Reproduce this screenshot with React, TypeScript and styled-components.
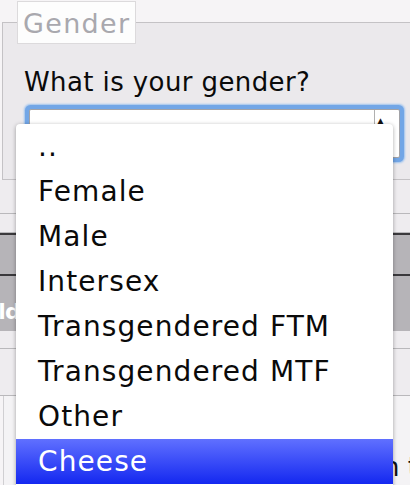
import React from "react";
import styled, { createGlobalStyle } from "styled-components";

const options = [
  "..",
  "Female",
  "Male",
  "Intersex",
  "Transgendered FTM",
  "Transgendered MTF",
  "Other",
  "Cheese",
];

const GlobalStyle = createGlobalStyle`
  html, body {
    margin: 0;
    padding: 0;
    width: 410px;
    height: 485px;
    overflow: hidden;
    background: #f6f4f6;
    font-family: "DejaVu Sans", Verdana, sans-serif;
  }
`;

const Page = styled.div`
  display: flex;
  flex-direction: column;
  width: 410px;
  height: 485px;
  overflow: hidden;

  & > * {
    flex-shrink: 0;
  }
`;

const Fieldset = styled.fieldset`
  margin: 1px 0 0 2px;
  padding: 0;
  width: 440px;
  height: 179px;
  box-sizing: border-box;
  background: #ebe9ec;
  border: 1px solid #c4c2c5;
  border-right: none;
`;

const Legend = styled.legend`
  margin-left: 14px;
  padding: 0 5px;
  height: 43px;
  box-sizing: border-box;
  line-height: 43px;
  background: #fdfdfd;
  border: 1px solid #dcdadc;
  color: #a9a8ae;
  font-size: 27px;
  letter-spacing: 1.3px;
`;

const Content = styled.div`
  display: flex;
  flex-direction: column;
  padding: 0 0 0 21px;
`;

const Label = styled.label`
  font-size: 26px;
  line-height: 32px;
  letter-spacing: 0.4px;
  color: #0a0a0a;
  margin-top: 22px;
`;

const SelectWrap = styled.div`
  position: relative;
  margin-top: 6px;
  width: 381px;
`;

const SelectBox = styled.div`
  display: flex;
  justify-content: flex-end;
  height: 47px;
  margin: 5px;
  background: #fff;
  border: 1px solid #a2a2a6;
  border-radius: 2px;
  box-shadow: 0 0 0 4px #72a6e6, 0 0 2px 5px #9cc2ee;
`;

const Stepper = styled.div`
  width: 22px;
  border-left: 1px solid #b0b0b0;
  display: flex;
  justify-content: flex-start;
  padding: 6px 0 0 2px;
  font-size: 9px;
  color: #111;
`;

const Dropdown = styled.ul`
  position: absolute;
  left: -8px;
  top: 20px;
  width: 377px;
  height: 370px;
  margin: 0;
  padding: 0;
  list-style: none;
  background: #fff;
  border-radius: 4px 4px 0 0;
  box-shadow: 0 1px 4px rgba(0, 0, 0, 0.35);
  z-index: 2;
`;

const Option = styled.li<{ $active?: boolean }>`
  height: 45px;
  display: flex;
  align-items: center;
  padding-left: 22px;
  font-size: 28px;
  letter-spacing: 1.1px;
  color: ${(p) => (p.$active ? "#fff" : "#0a0a0a")};
  background: ${(p) =>
    p.$active ? "linear-gradient(#6070ff, #1428f0)" : "transparent"};
`;

const Table = styled.div`
  display: flex;
  flex-direction: column;

  & > * {
    flex-shrink: 0;
  }
`;

const LightRow = styled.div<{ $h: number }>`
  height: ${(p) => p.$h}px;
  background: #eeecef;
  border-bottom: 1px solid #b9b8bb;
`;

const Band = styled.div<{ $h: number }>`
  height: ${(p) => p.$h}px;
  background: #b6b4b8;
  border-top: 2px solid #3a393c;
  display: flex;
  align-items: flex-end;
  color: #fff;
  font-weight: bold;
  font-size: 22px;
  letter-spacing: -1px;
  text-indent: -38px;
  padding-bottom: 7px;
  box-sizing: border-box;
`;

const TextBox = styled.div`
  margin-left: 3px;
  height: 100px;
  border-left: 1px solid #d0cfd2;
  background: #f4f3f5;
  display: flex;
  flex-direction: column;
  align-items: flex-end;
  padding-top: 55px;
  font-size: 26px;
  line-height: 32px;
  color: #111;
  white-space: nowrap;
`;

const Line = styled.div<{ $shift: number }>`
  margin-right: ${(p) => p.$shift}px;
`;

export default function App() {
  return (
    <Page>
      <GlobalStyle />
      <Fieldset>
        <Legend>Gender</Legend>
        <Content>
          <Label>What is your gender?</Label>
          <SelectWrap>
            <SelectBox>
              <Stepper>▲</Stepper>
            </SelectBox>
            <Dropdown>
              {options.map((o) => (
                <Option key={o} $active={o === "Cheese"}>
                  {o}
                </Option>
              ))}
            </Dropdown>
          </SelectWrap>
        </Content>
      </Fieldset>
      <Table>
        <LightRow $h={33} />
        <LightRow $h={18} />
        <Band $h={41} />
        <Band $h={57}>Child</Band>
        <LightRow $h={17} />
        <LightRow $h={46} />
        <TextBox>
          <Line $shift={-8}>relation t</Line>
          <Line $shift={-14}>with th</Line>
        </TextBox>
      </Table>
    </Page>
  );
}
